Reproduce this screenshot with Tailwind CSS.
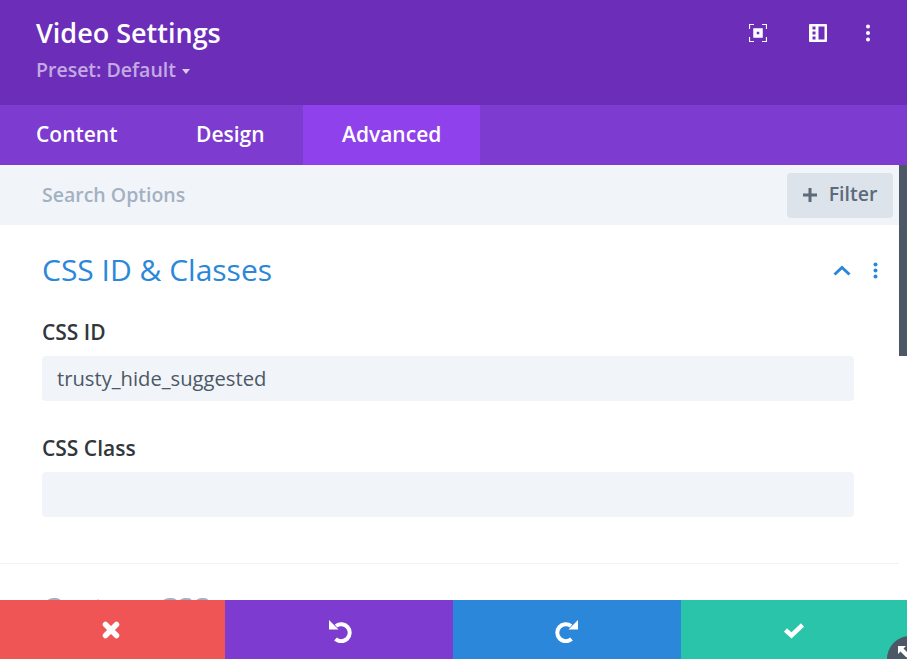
<!DOCTYPE html>
<html>
<head>
<meta charset="utf-8">
<script src="https://cdn.jsdelivr.net/npm/@tailwindcss/browser@4"></script>
</head>
<body class="bg-white">
<div class="relative w-[907px] h-[659px] overflow-hidden flex flex-col font-['Open_Sans',sans-serif] bg-white">
  <header class="h-[105px] shrink-0 bg-[#6c2eb9] flex justify-between pl-9 pr-[37px]">
    <div class="pt-[15px]">
      <h1 class="text-[27px] leading-[36px] font-semibold text-white">Video Settings</h1>
      <div class="mt-[5px] flex items-center text-[19.500px] leading-7 font-semibold text-white/60">Preset: Default
        <svg class="ml-[6px] mt-[2px]" width="8" height="5" viewBox="0 0 8 5"><path d="M0 0h8L4 5z" fill="#fff" fill-opacity=".75"/></svg>
      </div>
    </div>
    <div class="flex items-start pt-6">
      <svg class="mr-[42px]" width="18" height="18" viewBox="0 0 18 18" fill="none" stroke="#fff"><path d="M.5 5V.5H5M13 .5h4.500V5M17.500 13v4.500H13M5 17.500H.5V13" stroke-width="1.200"/><rect x="6" y="6" width="6" height="6" stroke-width="3.500"/></svg>
      <svg class="mr-[39px]" width="18" height="18" viewBox="0 0 18 18"><path fill="#fff" fill-rule="evenodd" d="M1 0h16a1 1 0 0 1 1 1v16a1 1 0 0 1-1 1H1a1 1 0 0 1-1-1V1a1 1 0 0 1 1-1zm2.500 2.500v3h3v-3zm0 5v3h3v-3zm0 5v3h3v-3zm6-10v13h6v-13z"/></svg>
      <svg width="4" height="18" viewBox="0 0 4 18" fill="#fff"><circle cx="2" cy="2.500" r="2"/><circle cx="2" cy="9" r="2"/><circle cx="2" cy="15.500" r="2"/></svg>
    </div>
  </header>
  <nav class="h-[60px] shrink-0 bg-[#7d3bcf] flex text-[21px] font-semibold text-white">
    <div class="w-[159px] pl-9 flex items-center">Content</div>
    <div class="w-[144px] pl-[37px] flex items-center">Design</div>
    <div class="w-[177px] pl-[39px] flex items-center bg-[#8f42ec]">Advanced</div>
  </nav>
  <div class="h-[60px] shrink-0 bg-[#f1f5f9] flex items-center justify-between pl-[42px] pr-[14px]">
    <span class="text-[19.500px] font-semibold text-[#a3b1c2]">Search Options</span>
    <div class="w-[106px] h-[45px] rounded-[4px] bg-[#dde3eb] flex items-center justify-center gap-[11px] pr-[1px] text-[19.500px] font-semibold text-[#5c6a7a]">
      <svg width="16" height="16" viewBox="0 0 16 16"><path d="M8 1v14M1 8h14" stroke="#5c6a7a" stroke-width="3"/></svg>
      <span class="mb-[2px]">Filter</span>
    </div>
  </div>
  <main class="flex-1 min-h-0 overflow-hidden pr-2">
    <section class="border-b border-[#f1f2f4] h-[339px] pl-[42px] pr-[45px]">
      <div class="flex items-center justify-between pt-[24px]">
        <h2 class="text-[30px] leading-[42px] text-[#2b87da]">CSS ID &amp; Classes</h2>
        <div class="flex items-center gap-[22px] mr-[-24px]">
          <svg width="18" height="11" viewBox="0 0 18 11" fill="none"><path d="M1.500 9.500 9 2.500l7.500 7" stroke="#2b87da" stroke-width="3"/></svg>
          <svg width="5" height="17" viewBox="0 0 5 17" fill="#2b87da"><circle cx="2.500" cy="2.500" r="2"/><circle cx="2.500" cy="8.500" r="2"/><circle cx="2.500" cy="14.500" r="2"/></svg>
        </div>
      </div>
      <label class="block mt-[25px] text-[21px] leading-[32px] font-[550] text-[#32373c]">CSS ID</label>
      <div class="mt-2 h-[45px] rounded-[4px] bg-[#f1f5f9] px-[15px] flex items-center text-[20.200px] text-[#4c5866] font-medium">trusty_hide_suggested</div>
      <label class="block mt-[31px] text-[21px] leading-[32px] font-[550] text-[#32373c]">CSS Class</label>
      <div class="mt-2 h-[45px] rounded-[4px] bg-[#f1f5f9]"></div>
    </section>
    <h2 class="pl-[42px] mt-[23px] text-[30px] leading-[42px] text-[#a3b1c2]">Custom CSS</h2>
  </main>
  <footer class="h-[59px] shrink-0 flex relative">
    <div class="w-[225px] bg-[#ef5555] flex items-center justify-center pr-[3px]">
      <svg width="18" height="18" viewBox="0 0 18 18"><path d="M3.500 3.500l11 11M14.500 3.500l-11 11" stroke="#fff" stroke-width="5.500" stroke-linecap="round"/></svg>
    </div>
    <div class="w-[228px] bg-[#7d3bcf] flex items-center justify-center">
      <svg class="ml-[2px] mt-[3px]" width="24" height="24" viewBox="0 0 24 24" fill="none"><path d="M8 7A8.500 8.500 0 1 1 7.500 20" stroke="#fff" stroke-width="4"/><path d="M1 1V10.500H10.500z" fill="#fff"/></svg>
    </div>
    <div class="w-[228px] bg-[#2b87da] flex items-center justify-center">
      <svg class="mt-[3px]" width="24" height="24" viewBox="0 0 24 24" fill="none"><path d="M16 7A8.500 8.500 0 1 0 16.500 20" stroke="#fff" stroke-width="4"/><path d="M23 1V10.500H13.500z" fill="#fff"/></svg>
    </div>
    <div class="w-[226px] bg-[#29c4a9] flex items-center justify-center">
      <svg width="22" height="18" viewBox="0 0 22 18" fill="none"><path d="M2.500 9l6 5.500L19.500 4" stroke="#fff" stroke-width="4.500"/></svg>
    </div>
  </footer>
  <div class="absolute right-0 top-[165px] w-2 h-[191px] bg-[#4c5866]"></div>
  <div class="absolute left-[887px] top-[636px] w-[46px] h-[46px] rounded-full bg-[#4c5866]">
    <svg class="absolute left-[11px] top-[10px]" width="12" height="13" viewBox="0 0 12 13" fill="#fff"><path d="M0 0h8L5.500 2.500 11.500 8.500 8.500 11.500 2.500 5.500 0 8z"/></svg>
  </div>
</div>
</body>
</html>
